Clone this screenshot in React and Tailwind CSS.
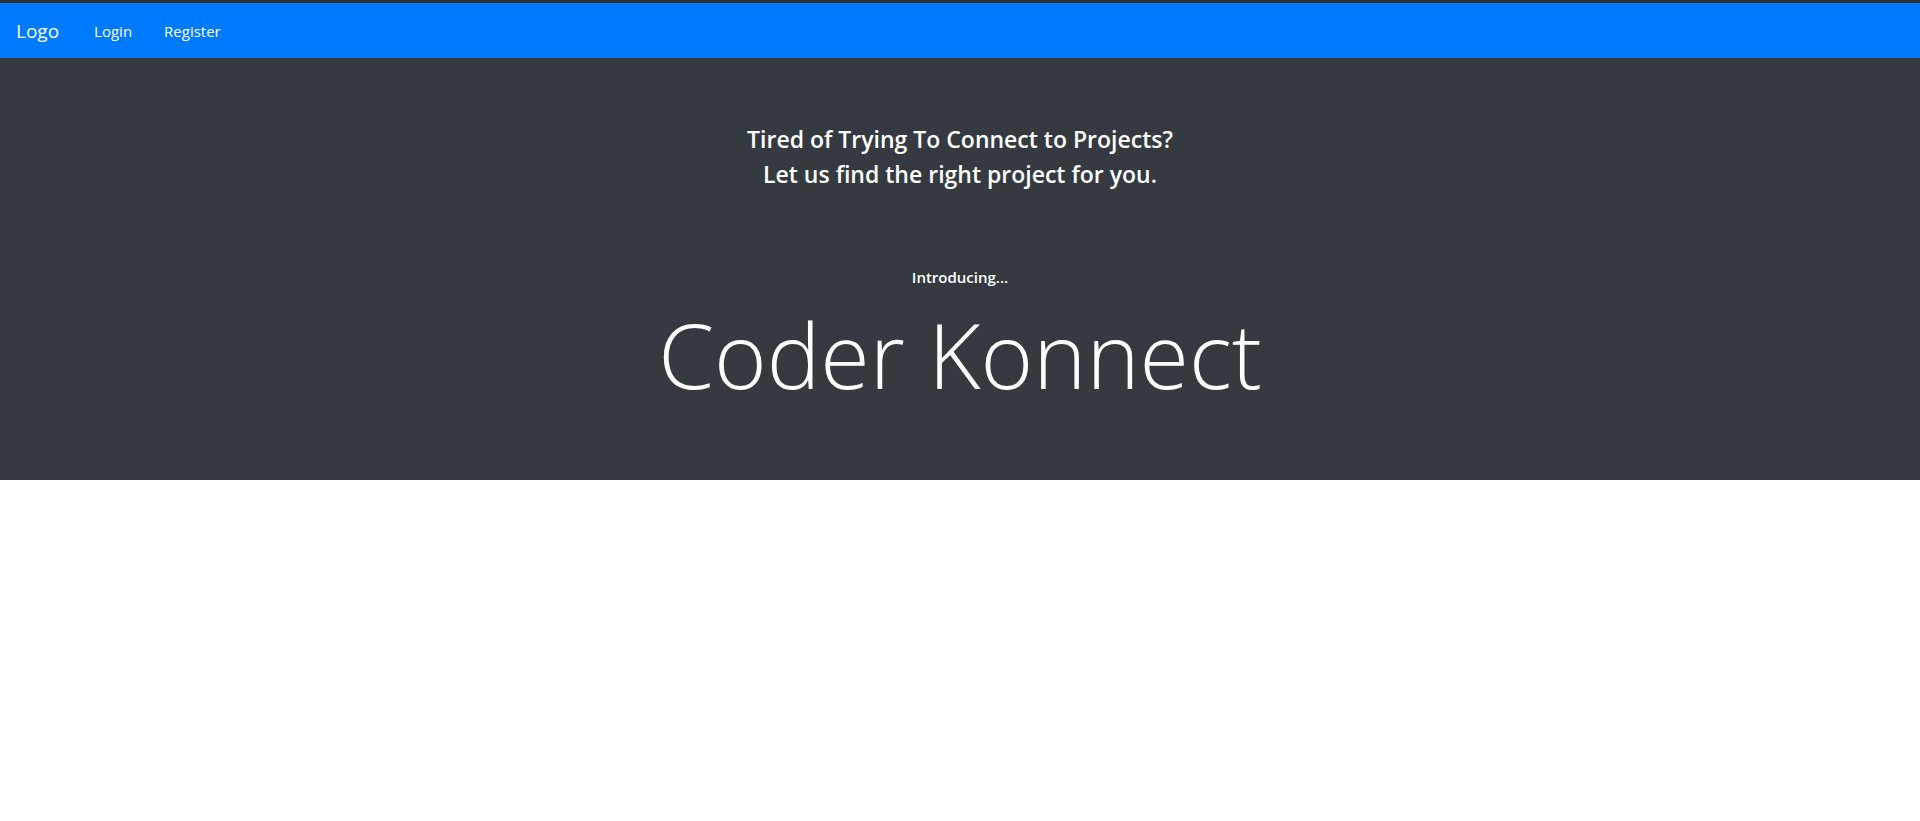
const FONT = { fontFamily: '"Open Sans", "Noto Sans", sans-serif' }

function Navbar() {
  return (
    <nav className="flex h-[58px] items-center border-t-[3px] border-[#2b3035] bg-[#007bff] px-4 pt-[2px] text-white">
      <a className="mr-[35px] text-[19px] leading-none">Logo</a>
      <a className="mr-[32px] text-[15px] leading-none">Login</a>
      <a className="text-[15px] leading-none">Register</a>
    </nav>
  )
}

function Hero() {
  return (
    <section className="flex flex-col items-center bg-[#343a40] pb-[72px] pt-[68px] text-center text-white">
      <h4 className="mb-[7px] text-[23px] font-semibold leading-[1.2]">Tired of Trying To Connect to Projects?</h4>
      <h4 className="text-[23px] font-semibold leading-[1.2]">Let us find the right project for you.</h4>
      <h6 className="mt-[80px] text-[15px] font-semibold leading-[1.2]">Introducing...</h6>
      <h1 className="mt-[14px] text-[90px] font-light leading-[1.2]">Coder Konnect</h1>
    </section>
  )
}

export default function App() {
  return (
    <div className="min-h-[821px] bg-white" style={FONT}>
      <Navbar />
      <Hero />
    </div>
  )
}
